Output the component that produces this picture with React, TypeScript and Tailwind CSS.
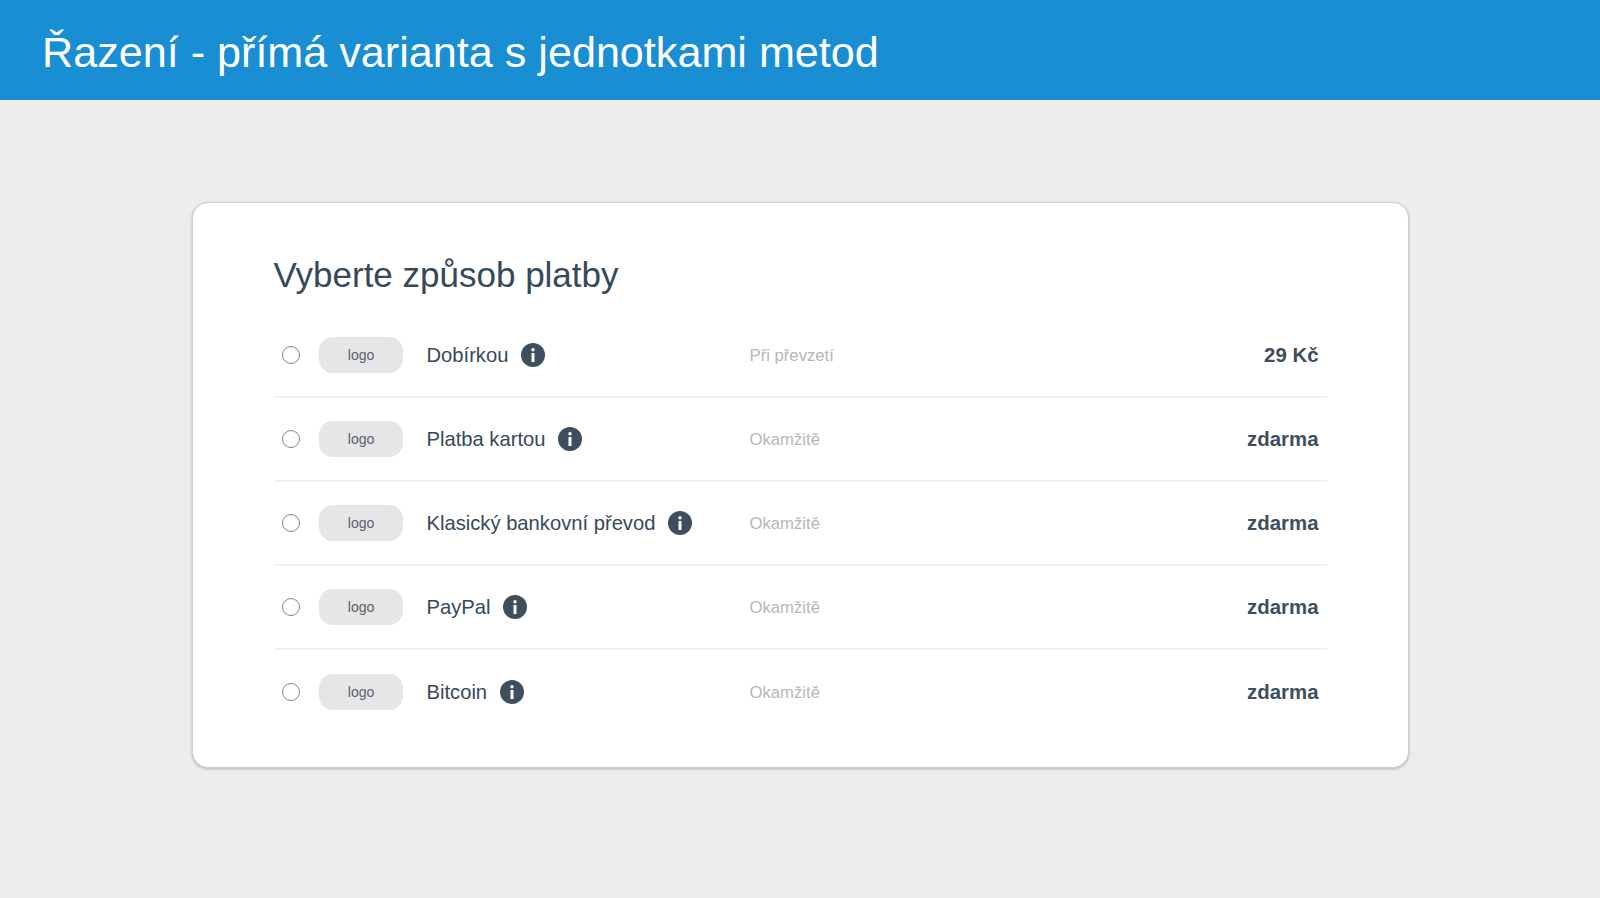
const methods = [
  { name: "Dobírkou", time: "Při převzetí", price: "29 Kč" },
  { name: "Platba kartou", time: "Okamžitě", price: "zdarma" },
  { name: "Klasický bankovní převod", time: "Okamžitě", price: "zdarma" },
  { name: "PayPal", time: "Okamžitě", price: "zdarma" },
  { name: "Bitcoin", time: "Okamžitě", price: "zdarma" },
];

const InfoIcon = () => (
  <svg viewBox="0 0 24 24" className="w-6 h-6 shrink-0 ml-[13px]">
    <circle cx="12" cy="12" r="12" fill="#3d4f5e" />
    <circle cx="12" cy="6.8" r="1.7" fill="#fff" />
    <rect x="10.5" y="10" width="3" height="9" rx="0.5" fill="#fff" />
  </svg>
);

const App = () => {
  return (
    <div className="min-h-[898px] bg-[#ededed] font-['Liberation_Sans',Arial,sans-serif]">
      <header className="h-[100px] bg-[#198ed2] flex items-center pl-[42px] pt-[4px]">
        <h1 className="text-[43.15px] text-white">Řazení - přímá varianta s jednotkami metod</h1>
      </header>

      <main className="pt-[102px] flex justify-center">
        <section className="w-[1217px] h-[566px] bg-white rounded-[16px] border border-[#cfcfcf] shadow-[0_1px_3px_rgba(0,0,0,0.25)] pt-[49px] px-[81px]">
          <h2 className="text-[35px] leading-[46px] text-[#34495a]">Vyberte způsob platby</h2>

          <div className="mt-[16px]">
            {methods.map((m, i) => (
              <div
                key={m.name}
                className={
                  i < methods.length - 1
                    ? "h-[84px] flex items-center border-b-2 border-[#f2f2f2] px-2"
                    : "h-[84px] flex items-center px-2"
                }
              >
                <div className="w-[18px] h-[18px] rounded-full border border-[#7b8894] shrink-0" />
                <div className="ml-[19px] w-[84px] h-[36px] rounded-[14px] bg-[#e6e6e6] flex items-center justify-center text-[14px] text-[#56636e] shrink-0 pl-[1px]">
                  logo
                </div>
                <div className="ml-[24px] w-[323px] flex items-center shrink-0">
                  <span className="text-[20.2px] text-[#34495a]">{m.name}</span>
                  <InfoIcon />
                </div>
                <div className="text-[16.7px] text-[#b3b8bc] pt-[1px]">{m.time}</div>
                <div className="ml-auto text-[20.4px] font-bold text-[#3d4f5e]">{m.price}</div>
              </div>
            ))}
          </div>
        </section>
      </main>
    </div>
  );
};

export default App;
